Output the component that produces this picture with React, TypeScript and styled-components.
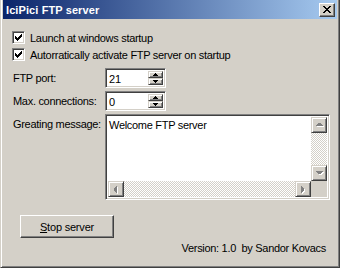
import styled, { createGlobalStyle } from "styled-components";

const GlobalStyle = createGlobalStyle`
    html, body {
        margin: 0;
        padding: 0;
        background: #D4D0C8;
    }
    body {
        font-family: "Liberation Sans", Arial, sans-serif;
        font-size: 11px;
        color: #000;
    }
`;

const Window = styled.div`
    width: 340px;
    height: 268px;
    box-sizing: border-box;
    background: #D4D0C8;
    border-left: 1px solid #D4D0C8;
    border-right: 1px solid #404040;
    border-bottom: 1px solid #404040;
    box-shadow: inset 1px 0 #fff, inset -1px -1px #808080;
    padding: 0 2px 2px 1px;
    display: flex;
    flex-direction: column;
`;

const TitleBar = styled.div`
    height: 19px;
    margin-left: 1px;
    display: flex;
    align-items: center;
    justify-content: space-between;
    padding: 0 2px 0 3px;
    background: linear-gradient(to right, #0A246A, #A6CAF0);
`;

const Title = styled.span`
    color: #fff;
    font-weight: bold;
    font-size: 11px;
    letter-spacing: 0.1px;
`;

const CloseButton = styled.div`
    width: 16px;
    height: 14px;
    box-sizing: border-box;
    background: #D4D0C8;
    border: 1px solid;
    border-color: #fff #404040 #404040 #fff;
    box-shadow: inset -1px -1px #808080;
    display: flex;
    align-items: center;
    justify-content: center;
`;

const Body = styled.div`
    flex: 1;
    display: flex;
    flex-direction: column;
    padding: 10px 10px 0 10px;
`;

const CheckRow = styled.label`
    height: 17px;
    display: flex;
    align-items: center;
    gap: 5px;
    white-space: nowrap;
    letter-spacing: -0.3px;
`;

const CheckBox = styled.span`
    width: 13px;
    height: 13px;
    box-sizing: border-box;
    background: #fff;
    border: 1px solid;
    border-color: #808080 #fff #fff #808080;
    box-shadow: inset 1px 1px #404040, inset -1px -1px #D4D0C8;
    display: flex;
`;

const FormGrid = styled.div`
    margin-top: 5px;
    display: grid;
    grid-template-columns: 93px auto;
    grid-template-rows: 20px 20px 86px;
    row-gap: 3px;
`;

const Label = styled.span<{ $top?: boolean }>`
    padding-left: 1px;
    align-self: ${p => (p.$top ? "start" : "center")};
    padding-top: ${p => (p.$top ? "4px" : "0")};
    letter-spacing: -0.3px;
    white-space: nowrap;
`;

const Sunken = styled.div`
    box-sizing: border-box;
    background: #fff;
    border: 1px solid;
    border-color: #808080 #fff #fff #808080;
    box-shadow: inset 1px 1px #404040, inset -1px -1px #D4D0C8;
    padding: 2px;
`;

const SpinField = styled(Sunken)`
    width: 61px;
    display: flex;
    align-items: stretch;
`;

const SpinValue = styled.span`
    flex: 1;
    padding-left: 1px;
    line-height: 16px;
`;

const SpinButtons = styled.div`
    width: 15px;
    display: flex;
    flex-direction: column;
`;

const RaisedButton = styled.div`
    flex: 1;
    box-sizing: border-box;
    background: #D4D0C8;
    border: 1px solid;
    border-color: #D4D0C8 #404040 #404040 #D4D0C8;
    box-shadow: inset 1px 1px #fff, inset -1px -1px #808080;
    display: flex;
    align-items: center;
    justify-content: center;
`;

const Memo = styled(Sunken)`
    width: 225px;
    padding: 2px;
    display: grid;
    grid-template-columns: 1fr 16px;
    grid-template-rows: 1fr 16px;
`;

const MemoText = styled.div`
    padding: 2px 1px;
    line-height: 13px;
    letter-spacing: -0.3px;
`;

const Track = styled.div<{ $vertical?: boolean }>`
    display: flex;
    flex-direction: ${p => (p.$vertical ? "column" : "row")};
    justify-content: space-between;
    background: repeating-conic-gradient(#fff 0 25%, #D4D0C8 0 50%) 0 0 / 2px 2px;
`;

const ScrollArrow = styled.div`
    width: 16px;
    height: 16px;
    box-sizing: border-box;
    background: #D4D0C8;
    border: 1px solid;
    border-color: #D4D0C8 #404040 #404040 #D4D0C8;
    box-shadow: inset 1px 1px #fff, inset -1px -1px #808080;
    display: flex;
    align-items: center;
    justify-content: center;
`;

const Corner = styled.div`
    background: #D4D0C8;
`;

const Footer = styled.div`
    display: flex;
    flex-direction: column;
    padding-top: 15px;
`;

const PushButton = styled.button`
    width: 94px;
    height: 23px;
    margin-left: 8px;
    padding: 0;
    font: inherit;
    color: #000;
    background: #D4D0C8;
    border: 1px solid;
    border-color: #fff #404040 #404040 #fff;
    box-shadow: inset -1px -1px #808080;
    letter-spacing: -0.2px;
`;

const Version = styled.div`
    align-self: flex-end;
    margin-top: 4px;
    margin-right: 1px;
    white-space: pre;
    letter-spacing: -0.3px;
`;

const Check = () => (
    <svg width="11" height="11" viewBox="0 0 11 11" shapeRendering="crispEdges">
        <path d="M2 4h1v1h1v1h1v-1h1v-1h1v-1h1v-1h1v3h-1v1h-1v1h-1v1h-1v1h-1v-1h-1v-1h-1z" fill="#000" />
    </svg>
);

const Arrow = ({ dir, color = "#000" }: { dir: "up" | "down" | "left" | "right"; color?: string }) => {
    const shapes = {
        up: "M0 3h7v-1h-1v-1h-1v-1h-3v1h-1v1h-1z",
        down: "M0 0h7v1h-1v1h-1v1h-3v-1h-1v-1h-1z",
        left: "M3 0v7h-1v-1h-1v-1h-1v-3h1v-1h1v-1z",
        right: "M0 0v7h1v-1h1v-1h1v-3h-1v-1h-1v-1z",
    };
    const horizontal = dir === "left" || dir === "right";
    return (
        <svg width={horizontal ? 4 : 7} height={horizontal ? 7 : 4} viewBox={horizontal ? "0 0 4 7" : "0 0 7 4"} shapeRendering="crispEdges">
            <path d={shapes[dir]} fill={color} />
        </svg>
    );
};

const SmallArrow = ({ up }: { up?: boolean }) => (
    <svg width="5" height="3" viewBox="0 0 5 3" shapeRendering="crispEdges">
        <path d={up ? "M2 0h1v1h1v1h1v1h-5v-1h1v-1h1z" : "M0 0h5v1h-1v1h-1v1h-1v-1h-1v-1h-1z"} fill="#000" />
    </svg>
);

const DisabledArrow = ({ dir }: { dir: "up" | "down" | "left" | "right" }) => (
    <span style={{ position: "relative", display: "flex" }}>
        <span style={{ position: "absolute", left: 1, top: 1, display: "flex" }}>
            <Arrow dir={dir} color="#fff" />
        </span>
        <span style={{ position: "relative", display: "flex" }}>
            <Arrow dir={dir} color="#808080" />
        </span>
    </span>
);

const Spin = ({ value }: { value: string }) => (
    <SpinField>
        <SpinValue>{value}</SpinValue>
        <SpinButtons>
            <RaisedButton><SmallArrow up /></RaisedButton>
            <RaisedButton><SmallArrow /></RaisedButton>
        </SpinButtons>
    </SpinField>
);

export default function App() {
    return (
        <>
            <GlobalStyle />
            <Window>
                <TitleBar>
                    <Title>IciPici FTP server</Title>
                    <CloseButton>
                        <svg width="8" height="7" viewBox="0 0 8 7" shapeRendering="crispEdges">
                            <path d="M0 0h2v1h1v1h2v-1h1v-1h2v1h-1v1h-1v1h-1v1h1v1h1v1h1v1h-2v-1h-1v-1h-2v1h-1v1h-2v-1h1v-1h1v-1h1v-1h-1v-1h-1v-1h-1z" fill="#000" />
                        </svg>
                    </CloseButton>
                </TitleBar>
                <Body>
                    <CheckRow><CheckBox><Check /></CheckBox>Launch at windows startup</CheckRow>
                    <CheckRow><CheckBox><Check /></CheckBox>Autorratically activate FTP server on startup</CheckRow>
                    <FormGrid>
                        <Label>FTP port:</Label>
                        <Spin value="21" />
                        <Label>Max. connections:</Label>
                        <Spin value="0" />
                        <Label $top>Greating message:</Label>
                        <Memo>
                            <MemoText>Welcome FTP server</MemoText>
                            <Track $vertical>
                                <ScrollArrow><DisabledArrow dir="up" /></ScrollArrow>
                                <ScrollArrow><DisabledArrow dir="down" /></ScrollArrow>
                            </Track>
                            <Track>
                                <ScrollArrow><DisabledArrow dir="left" /></ScrollArrow>
                                <ScrollArrow><DisabledArrow dir="right" /></ScrollArrow>
                            </Track>
                            <Corner />
                        </Memo>
                    </FormGrid>
                    <Footer>
                        <PushButton><u>S</u>top server</PushButton>
                        <Version>{"Version: 1.0  by Sandor Kovacs"}</Version>
                    </Footer>
                </Body>
            </Window>
        </>
    );
}
